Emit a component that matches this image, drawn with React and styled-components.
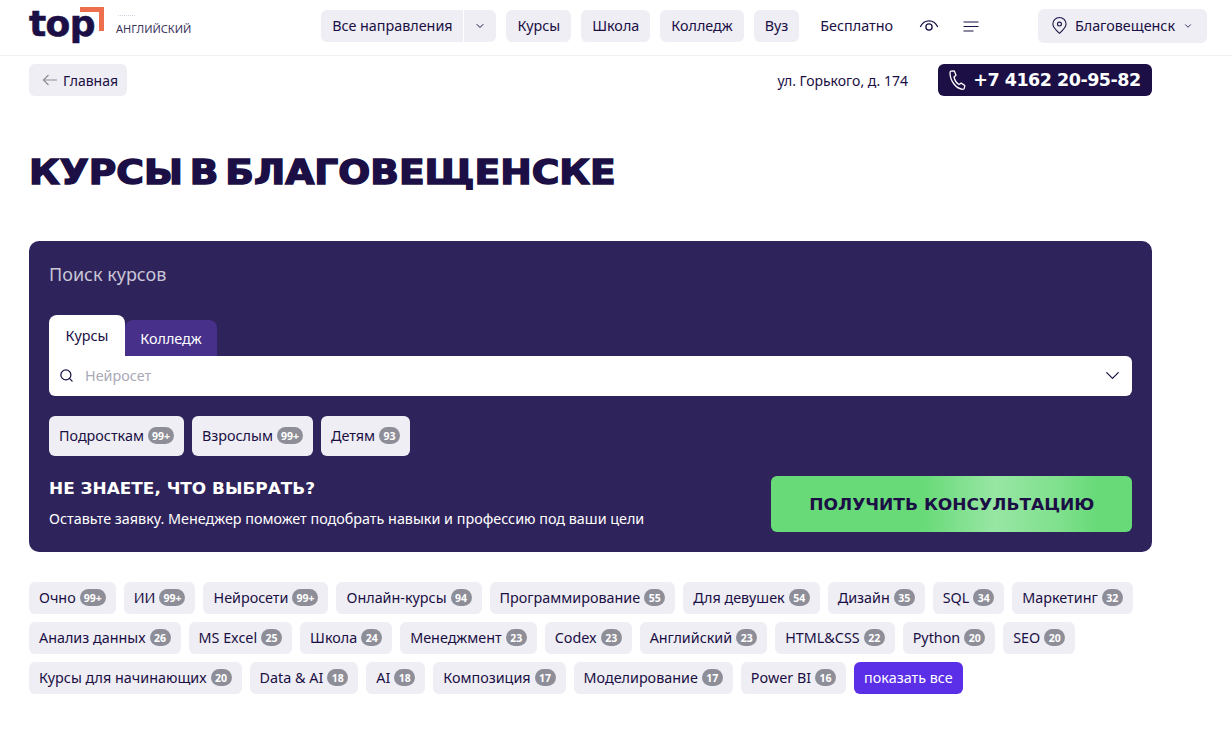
import React from 'react';
import styled, { createGlobalStyle } from 'styled-components';
import { ChevronDown, Search } from 'lucide-react';

const GlobalStyle = createGlobalStyle`
  html, body {
    margin: 0;
    background: #fff;
    color: #1b0f45;
    font-family: "Noto Sans", "Liberation Sans", sans-serif;
    font-size: 14.35px;
  }
  * { box-sizing: border-box; }
`;

const Header = styled.header`
  height: 56px;
  padding: 0 25px 3px 29px;
  display: flex;
  align-items: center;
  border-bottom: 1px solid #f0f0f2;
`;

const Logo = styled.div`
  position: relative;
  width: 87px;
  height: 46px;
  margin-top: -2px;
  flex: none;
`;

const LogoWord = styled.span`
  position: absolute;
  left: 0;
  top: 1px;
  font: 900 36px/42px "DejaVu Sans", sans-serif;
  -webkit-text-stroke: 0.6px #1b0f45;
  letter-spacing: -0.6px;
  color: #1b0f45;
`;

const LogoCorner = styled.span`
  position: absolute;
  left: 51px;
  top: 5px;
  width: 24px;
  height: 24px;
  border-top: 5px solid #ee6f4d;
  border-right: 5px solid #ee6f4d;
`;

const LogoCaption = styled.span`
  position: relative;
  margin-top: 4px;
  font-size: 11px;
  color: #3d3560;
  flex: none;

  &::before {
    content: '';
    position: absolute;
    left: 2px;
    top: -6px;
    width: 17px;
    border-top: 1px dotted #d5d3e0;
  }
`;

const Nav = styled.nav`
  margin-left: 130px;
  display: flex;
  align-items: center;
  gap: 10px;
  flex: none;
`;

const SplitButton = styled.div`
  display: flex;
  height: 32px;
  border-radius: 6px;
  overflow: hidden;
  gap: 1px;
`;

const SplitLabel = styled.span`
  width: 142px;
  padding-bottom: 2px;
  background: #eeeef4;
  display: flex;
  align-items: center;
  justify-content: center;
`;

const SplitArrow = styled.span`
  width: 32px;
  background: #eeeef4;
  display: flex;
  align-items: center;
  justify-content: center;
`;

const NavButton = styled.a`
  height: 32px;
  padding: 0 ${p => (p.$plain ? '0' : '11px')} 2px;
  margin-left: ${p => (p.$plain ? '11px' : '0')};
  border-radius: 6px;
  background: ${p => (p.$plain ? 'transparent' : '#eeeef4')};
  display: flex;
  align-items: center;
`;

const IconSlot = styled.span`
  width: ${p => p.$width}px;
  margin-left: ${p => p.$gap}px;
  display: flex;
  align-items: center;
  justify-content: center;
`;

const CityButton = styled.div`
  margin-left: auto;
  width: 169px;
  height: 34px;
  padding: 0 14px 1px;
  border-radius: 6px;
  background: #eeeef4;
  display: flex;
  align-items: center;
  gap: 8px;
  flex: none;
`;

const Page = styled.main`
  width: 1123px;
  margin-left: 29px;
`;

const TopRow = styled.div`
  margin-top: 8px;
  display: flex;
  align-items: center;
`;

const BackLink = styled.a`
  width: 98px;
  height: 32px;
  padding-left: 13px;
  border-radius: 6px;
  background: #eeeef4;
  display: flex;
  align-items: center;
  gap: 5px;
  font-size: 14px;
`;

const Address = styled.span`
  margin-left: auto;
  margin-right: 30px;
  font-size: 14px;
`;

const PhoneLink = styled.a`
  width: 214px;
  height: 32px;
  border-radius: 6px;
  background: #1b0f45;
  color: #fff;
  display: flex;
  align-items: center;
  justify-content: center;
  gap: 7px;
  font: 700 17.5px "DejaVu Sans", sans-serif;
  letter-spacing: -0.5px;
`;

const Title = styled.h1`
  width: fit-content;
  margin: 58px 0 0;
  height: 38px;
  font: 700 33px/38px "DejaVu Sans", sans-serif;
  -webkit-text-stroke: 1.4px #1b0f45;
  word-spacing: -5.5px;
  text-transform: uppercase;
  color: #1b0f45;
  white-space: nowrap;
  transform: scaleX(1.14);
  transform-origin: left center;
`;

const SearchPanel = styled.section`
  margin-top: 49px;
  height: 311px;
  padding: 20px;
  border-radius: 10px;
  background: #2f235c;
  display: flex;
  flex-direction: column;
`;

const PanelTitle = styled.div`
  height: 26px;
  font-size: 18px;
  line-height: 26px;
  color: #c9c6d6;
`;

const Tabs = styled.div`
  margin-top: 28px;
  height: 41px;
  display: flex;
  align-items: flex-end;
`;

const Tab = styled.div`
  width: ${p => (p.$active ? '76px' : '92px')};
  height: ${p => (p.$active ? '41px' : '36px')};
  border-radius: 8px 8px 0 0;
  background: ${p => (p.$active ? '#fff' : '#46308a')};
  color: ${p => (p.$active ? '#1b0f45' : '#fff')};
  display: flex;
  align-items: center;
  justify-content: center;
`;

const SearchField = styled.div`
  height: 40px;
  padding: 0 8px 1px 10px;
  border-radius: 0 6px 6px 6px;
  background: #fff;
  display: flex;
  align-items: center;
  gap: 11px;
  color: #a9a9b8;
`;

const FieldArrow = styled.span`
  margin-left: auto;
  display: flex;
`;

const AudienceRow = styled.div`
  margin-top: 20px;
  display: flex;
  gap: 8px;
`;

const Chip = styled.a`
  height: ${p => (p.$tall ? '40px' : '32px')};
  padding: 0 10px 1px;
  border-radius: 6px;
  background: #eeeef4;
  color: #1b0f45;
  display: flex;
  align-items: center;
  gap: 4px;
  white-space: nowrap;
`;

const Count = styled.span`
  min-width: 21px;
  height: 17px;
  padding: 0 4px;
  border-radius: 9px;
  background: #8e8e98;
  color: #fff;
  display: flex;
  align-items: center;
  justify-content: center;
  font-size: 10.5px;
  font-weight: 700;
`;

const Consult = styled.div`
  margin-top: 20px;
  display: flex;
  align-items: center;
  justify-content: space-between;
`;

const ConsultHeading = styled.div`
  width: fit-content;
  font: 700 15.5px/20px "DejaVu Sans", sans-serif;
  color: #fff;
  white-space: nowrap;
  transform: scaleX(1.09);
  transform-origin: left center;
`;

const ConsultText = styled.div`
  margin-top: 10px;
  line-height: 20px;
  color: #fff;
`;

const ConsultButton = styled.a`
  width: 361px;
  height: 56px;
  border-radius: 6px;
  background: linear-gradient(90deg, #68da78 0%, #68da78 42%, #97e6a3 62%, #7fe08d 80%, #68da78 90%);
  display: flex;
  align-items: center;
  justify-content: center;
`;

const ConsultLabel = styled.span`
  font: 700 16px "DejaVu Sans", sans-serif;
  color: #1b0f45;
  white-space: nowrap;
  transform: scaleX(1.065);
`;

const TagCloud = styled.div`
  margin-top: 30px;
  display: flex;
  flex-wrap: wrap;
  gap: 8px;
`;

const ShowAll = styled.a`
  height: 32px;
  padding: 0 10px 1px;
  border-radius: 6px;
  background: #5b2ee8;
  color: #fff;
  display: flex;
  align-items: center;
`;

const tags = [
  ['Очно', '99+'], ['ИИ', '99+'], ['Нейросети', '99+'], ['Онлайн-курсы', '94'],
  ['Программирование', '55'], ['Для девушек', '54'], ['Дизайн', '35'], ['SQL', '34'],
  ['Маркетинг', '32'], ['Анализ данных', '26'], ['MS Excel', '25'], ['Школа', '24'],
  ['Менеджмент', '23'], ['Codex', '23'], ['Английский', '23'], ['HTML&CSS', '22'],
  ['Python', '20'], ['SEO', '20'], ['Курсы для начинающих', '20'], ['Data & AI', '18'],
  ['AI', '18'], ['Композиция', '17'], ['Моделирование', '17'], ['Power BI', '16'],
];

const EyeIcon = () => (
  <svg width="20" height="14" viewBox="0 0 20 14" fill="none" stroke="#1b0f45" strokeWidth="1.3">
    <path d="M1.5 7.5C3.5 3.5 6.5 1.8 10 1.8s6.5 1.7 8.5 5.7" strokeLinecap="round" />
    <circle cx="10" cy="8" r="3.1" />
  </svg>
);

const MenuIcon = () => (
  <svg width="16" height="11" viewBox="0 0 16 11" fill="none" stroke="#1b0f45" strokeWidth="1">
    <path d="M0.5 1h15M0.5 5.5h15M0.5 10h10" />
  </svg>
);

const PinIcon = () => (
  <svg width="18" height="21" viewBox="0 0 18 21" fill="none" stroke="#1b0f45" strokeWidth="1.3">
    <path d="M9 20C5 16.5 1 13 1 8.8A8 8 0 0 1 17 8.8C17 13 13 16.5 9 20Z" strokeLinejoin="round" />
    <circle cx="9" cy="8.8" r="2.4" />
  </svg>
);

const PhoneIcon = () => (
  <svg width="17" height="20" viewBox="0 0 17 20" fill="none" stroke="#fff" strokeWidth="1.3" strokeLinejoin="round">
    <path d="M2 1.2 5.3 1 7 5.2 5 7c.6 2.9 2.6 6 5 7.5l2.2-1.4 3.6 2.4-.5 2.9c-.2.6-.8.9-1.5.9C7 18.8 1.3 11 1 3.2c0-1 .3-1.8 1-2Z" />
  </svg>
);

const BackArrow = () => (
  <svg width="16" height="12" viewBox="0 0 16 12" fill="none" stroke="#8e8e98" strokeWidth="1.2">
    <path d="M15 6H1.5M6.5 1 1.5 6l5 5" />
  </svg>
);

const App = () => (
  <>
    <GlobalStyle />
    <Header>
      <Logo>
        <LogoWord>top</LogoWord>
        <LogoCorner />
      </Logo>
      <LogoCaption>АНГЛИЙСКИЙ</LogoCaption>
      <Nav>
        <SplitButton>
          <SplitLabel>Все направления</SplitLabel>
          <SplitArrow><ChevronDown size={12} color="#1b0f45" /></SplitArrow>
        </SplitButton>
        <NavButton>Курсы</NavButton>
        <NavButton>Школа</NavButton>
        <NavButton>Колледж</NavButton>
        <NavButton>Вуз</NavButton>
        <NavButton $plain>Бесплатно</NavButton>
        <IconSlot $width={20} $gap={16}><EyeIcon /></IconSlot>
        <IconSlot $width={16} $gap={14}><MenuIcon /></IconSlot>
      </Nav>
      <CityButton>
        <PinIcon />
        Благовещенск
        <ChevronDown size={12} color="#1b0f45" />
      </CityButton>
    </Header>
    <Page>
      <TopRow>
        <BackLink><BackArrow />Главная</BackLink>
        <Address>ул. Горького, д. 174</Address>
        <PhoneLink><PhoneIcon />+7 4162 20-95-82</PhoneLink>
      </TopRow>
      <Title>Курсы в Благовещенске</Title>
      <SearchPanel>
        <PanelTitle>Поиск курсов</PanelTitle>
        <Tabs>
          <Tab $active>Курсы</Tab>
          <Tab>Колледж</Tab>
        </Tabs>
        <SearchField>
          <Search size={15} color="#1b0f45" strokeWidth={2} />
          Нейросет
          <FieldArrow><ChevronDown size={23} color="#1b0f45" strokeWidth={1.3} /></FieldArrow>
        </SearchField>
        <AudienceRow>
          <Chip $tall>Подросткам <Count>99+</Count></Chip>
          <Chip $tall>Взрослым <Count>99+</Count></Chip>
          <Chip $tall>Детям <Count>93</Count></Chip>
        </AudienceRow>
        <Consult>
          <div>
            <ConsultHeading>НЕ ЗНАЕТЕ, ЧТО ВЫБРАТЬ?</ConsultHeading>
            <ConsultText>Оставьте заявку. Менеджер поможет подобрать навыки и профессию под ваши цели</ConsultText>
          </div>
          <ConsultButton><ConsultLabel>ПОЛУЧИТЬ КОНСУЛЬТАЦИЮ</ConsultLabel></ConsultButton>
        </Consult>
      </SearchPanel>
      <TagCloud>
        {tags.map(([name, count]) => (
          <Chip key={name}>{name} <Count>{count}</Count></Chip>
        ))}
        <ShowAll>показать все</ShowAll>
      </TagCloud>
    </Page>
  </>
);

export default App;
